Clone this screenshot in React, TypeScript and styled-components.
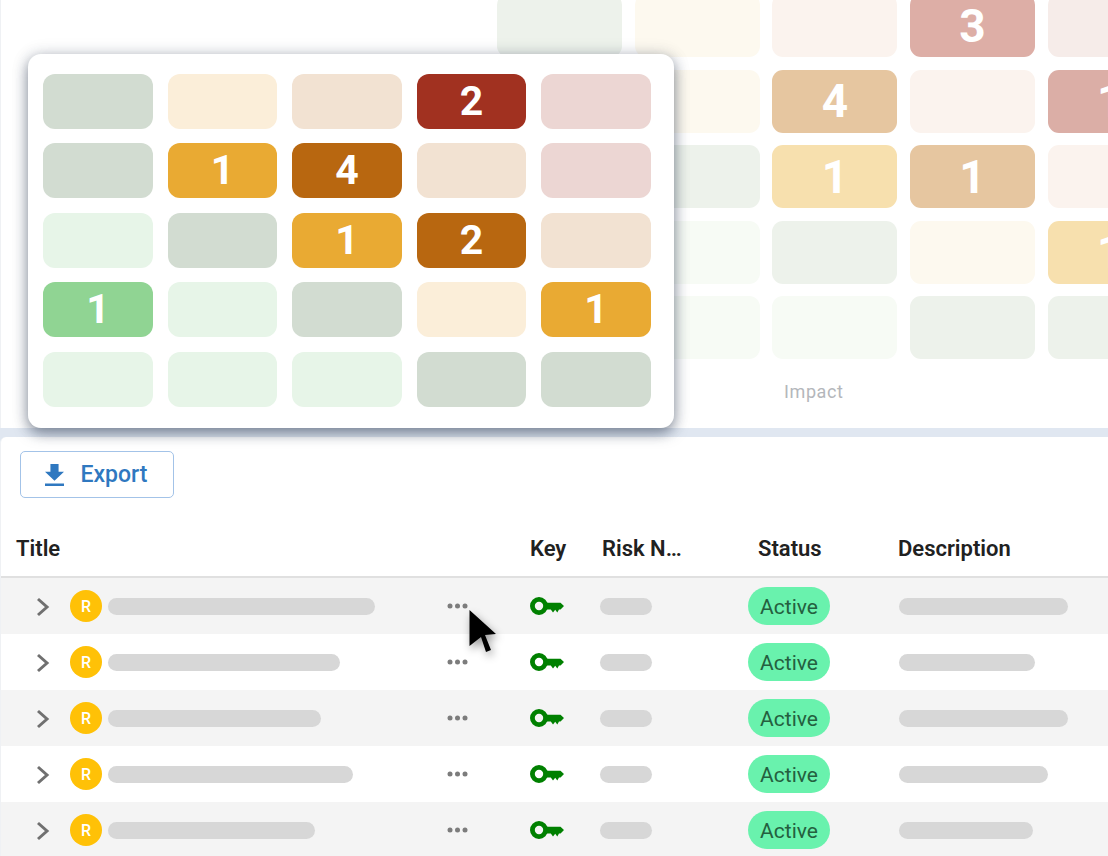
import React from "react";
import styled, { createGlobalStyle } from "styled-components";

const Global = createGlobalStyle`
  html, body { margin: 0; padding: 0; background: #e0e7f1; }
  body { font-family: Roboto, "Liberation Sans", sans-serif; }
`;

const Page = styled.div`
  position: relative;
  width: 1108px;
  height: 856px;
  overflow: hidden;
  background: #e0e7f1;
`;

const TopPanel = styled.section`
  height: 428px;
  border-left: 1px solid #eff1f4;
  padding-left: 496px;
  box-sizing: border-box;
  overflow: hidden;
  background: #fff;
`;

const BackGrid = styled.div`
  display: grid;
  grid-template-columns: repeat(5, 125px);
  grid-auto-rows: 63px;
  column-gap: 12.7px;
  row-gap: 12.5px;
  margin-top: -6px;
`;

const BackCell = styled.div<{ $bg: string }>`
  display: flex;
  align-items: center;
  justify-content: center;
  border-radius: 11px;
  background: ${(p) => p.$bg};
  color: #fff;
  font-size: 46px;
  font-weight: 700;
  line-height: 1;
`;

const AxisLabel = styled.div`
  margin: 22px 0 0 287px;
  color: #b4b7bb;
  font-size: 18px;
  line-height: 22px;
  letter-spacing: 0.6px;
`;

const Popover = styled.div`
  position: absolute;
  left: 28px;
  top: 54px;
  z-index: 2;
  width: 646px;
  height: 374px;
  box-sizing: border-box;
  padding: 19.9px 0 0 15.2px;
  border-radius: 13px;
  background: #fff;
  box-shadow: 0 5px 14px rgba(38, 52, 76, 0.55), 0 0 18px rgba(38, 52, 76, 0.12);
`;

const FrontGrid = styled.div`
  display: grid;
  grid-template-columns: repeat(5, 109.6px);
  grid-auto-rows: 55px;
  column-gap: 14.9px;
  row-gap: 14.5px;
`;

const FrontCell = styled.div<{ $bg: string }>`
  display: flex;
  align-items: center;
  justify-content: center;
  border-radius: 12px;
  background: ${(p) => p.$bg};
  color: #fff;
  font-size: 41px;
  font-weight: 700;
  line-height: 1;
`;

const BottomPanel = styled.section`
  margin: 9px 0 0;
  height: 419px;
  box-sizing: border-box;
  border-left: 1px solid #eff1f4;
  overflow: hidden;
  border-radius: 6px 0 0 0;
  background: #fff;
`;

const Toolbar = styled.div`
  padding: 14px 0 23px 18.5px;
`;

const ExportButton = styled.button`
  display: flex;
  align-items: center;
  gap: 17px;
  width: 154px;
  height: 47px;
  padding: 0 0 0 24px;
  box-sizing: border-box;
  border: 1px solid #a3c3e8;
  border-radius: 5px;
  background: #fff;
  color: #2f78c0;
  font-family: inherit;
  font-size: 23px;
  font-weight: 500;
`;

const columns = "529px 70px 148px 150px 1fr";

const HeaderRow = styled.div`
  display: grid;
  grid-template-columns: ${columns};
  align-items: center;
  height: 57px;
  padding-bottom: 1px;
  box-sizing: border-box;
  border-bottom: 2px solid #e0e0e0;
  color: #212121;
  font-size: 22px;
  font-weight: 600;
`;

const HeaderCell = styled.div<{ $pad: number }>`
  padding-left: ${(p) => p.$pad}px;
  min-width: 0;
  white-space: nowrap;
`;

const TruncatedHeader = styled(HeaderCell)<{ $max: number }>`
  max-width: ${(p) => p.$max}px;
  box-sizing: border-box;
  overflow: hidden;
  text-overflow: ellipsis;
`;

const Rows = styled.div``;

const Row = styled.div`
  display: grid;
  grid-template-columns: ${columns};
  align-items: center;
  height: 56px;
  &:nth-child(odd) {
    background: #f4f4f4;
  }
`;

const TitleCell = styled.div`
  display: flex;
  align-items: center;
  padding: 0 62px 0 35px;
`;

const Chevron = styled.svg`
  width: 14px;
  height: 20px;
  margin: 1px 20px 0 0;
  flex: none;
`;

const Avatar = styled.div`
  display: flex;
  align-items: center;
  justify-content: center;
  flex: none;
  width: 32px;
  height: 32px;
  margin-right: 6px;
  border-radius: 50%;
  background: #ffc107;
  color: #fff;
  font-size: 16px;
  font-weight: 500;
`;

const Skeleton = styled.div<{ $w: number }>`
  width: ${(p) => p.$w}px;
  height: 17px;
  border-radius: 9px;
  background: #d7d7d7;
`;

const DescSkeleton = styled(Skeleton)`
  margin-left: 1px;
`;

const TitleText = styled.div`
  flex: 1;
  min-width: 0;
`;

const Dots = styled.svg`
  width: 21px;
  height: 6px;
  flex: none;
`;

const KeyIcon = styled.svg`
  display: block;
  width: 34px;
  height: 18px;
`;

const Pill = styled.div`
  display: flex;
  align-items: center;
  justify-content: center;
  width: 82px;
  height: 38px;
  padding-top: 1px;
  box-sizing: border-box;
  border-radius: 19px;
  background: #69f2ad;
  color: #24603f;
  font-size: 21px;
`;

const Cursor = styled.svg`
  position: absolute;
  left: 462px;
  top: 602px;
  z-index: 3;
  width: 48px;
  height: 62px;
  filter: drop-shadow(2px 4px 4px rgba(0, 0, 0, 0.4));
`;

const backCells: Array<[string, string?]> = [
  ["#edf2eb"], ["#fdf9ef"], ["#fbf3ee"], ["#ddaea6", "3"], ["#f6ece9"],
  ["#fdf9ef"], ["#fdf9ef"], ["#e6c6a0", "4"], ["#fbf3ee"], ["#dbaea6", "1"],
  ["#edf2eb"], ["#edf2eb"], ["#f7e0ae", "1"], ["#e6c6a0", "1"], ["#fbf3ee"],
  ["#f7fbf5"], ["#f7fbf5"], ["#edf2eb"], ["#fdf9ef"], ["#f7e0ae", "1"],
  ["#f7fbf5"], ["#f7fbf5"], ["#f7fbf5"], ["#edf2eb"], ["#edf2eb"],
];

const sage = "#d2dcd1";
const cream = "#fbeed9";
const tan = "#f2e2d2";
const pink = "#ecd6d3";
const mint = "#e7f5e8";
const amber = "#e9aa33";
const brown = "#b86710";

const frontCells: Array<[string, string?]> = [
  [sage], [cream], [tan], ["#a13120", "2"], [pink],
  [sage], [amber, "1"], [brown, "4"], [tan], [pink],
  [mint], [sage], [amber, "1"], [brown, "2"], [tan],
  ["#90d493", "1"], [mint], [sage], [cream], [amber, "1"],
  [mint], [mint], [mint], [sage], [sage],
];

const rows = [
  { title: 267, desc: 169 },
  { title: 232, desc: 136 },
  { title: 213, desc: 169 },
  { title: 245, desc: 149 },
  { title: 207, desc: 134 },
];

export default function App() {
  return (
    <Page>
      <Global />
      <TopPanel>
        <BackGrid>
          {backCells.map(([bg, n], i) => (
            <BackCell key={i} $bg={bg}>{n}</BackCell>
          ))}
        </BackGrid>
        <AxisLabel>Impact</AxisLabel>
      </TopPanel>
      <Popover>
        <FrontGrid>
          {frontCells.map(([bg, n], i) => (
            <FrontCell key={i} $bg={bg}>{n}</FrontCell>
          ))}
        </FrontGrid>
      </Popover>
      <BottomPanel>
        <Toolbar>
          <ExportButton>
            <svg width="19" height="22" viewBox="5 3 14 17" preserveAspectRatio="none" fill="currentColor">
              <path d="M19 9h-4V3H9v6H5l7 7 7-7zM5 18v2h14v-2H5z" />
            </svg>
            Export
          </ExportButton>
        </Toolbar>
        <HeaderRow>
          <HeaderCell $pad={15}>Title</HeaderCell>
          <HeaderCell $pad={0}>Key</HeaderCell>
          <TruncatedHeader $pad={2} $max={84}>Risk Name</TruncatedHeader>
          <HeaderCell $pad={10}>Status</HeaderCell>
          <HeaderCell $pad={0}>Description</HeaderCell>
        </HeaderRow>
        <Rows>
          {rows.map((r, i) => (
            <Row key={i}>
              <TitleCell>
                <Chevron viewBox="0 0 14 20" fill="none" stroke="#707070" strokeWidth="3">
                  <path d="M2 2l9 8-9 8" />
                </Chevron>
                <Avatar>R</Avatar>
                <TitleText><Skeleton $w={r.title} /></TitleText>
                <Dots viewBox="0 0 21 6" fill="#7c7c7c">
                  <circle cx="3" cy="3" r="2.5" />
                  <circle cx="10.5" cy="3" r="2.5" />
                  <circle cx="18" cy="3" r="2.5" />
                </Dots>
              </TitleCell>
              <KeyIcon viewBox="0 0 34 18">
                <circle cx="9" cy="9" r="6.6" fill="none" stroke="#008000" strokeWidth="4.8" />
                <path fill="#008000" d="M15 5.8H30.5L34 9 30.5 12.4H29L27.3 15.4 25.2 12.8 23 15.4 20.8 12.4H15z" />
              </KeyIcon>
              <Skeleton $w={52} />
              <div><Pill>Active</Pill></div>
              <DescSkeleton $w={r.desc} />
            </Row>
          ))}
        </Rows>
      </BottomPanel>
      <Cursor viewBox="0 0 48 62">
        <path fill="#000" d="M7.5 8V44L19 35 24 50 29 48 23 33 34 32z" />
      </Cursor>
    </Page>
  );
}
